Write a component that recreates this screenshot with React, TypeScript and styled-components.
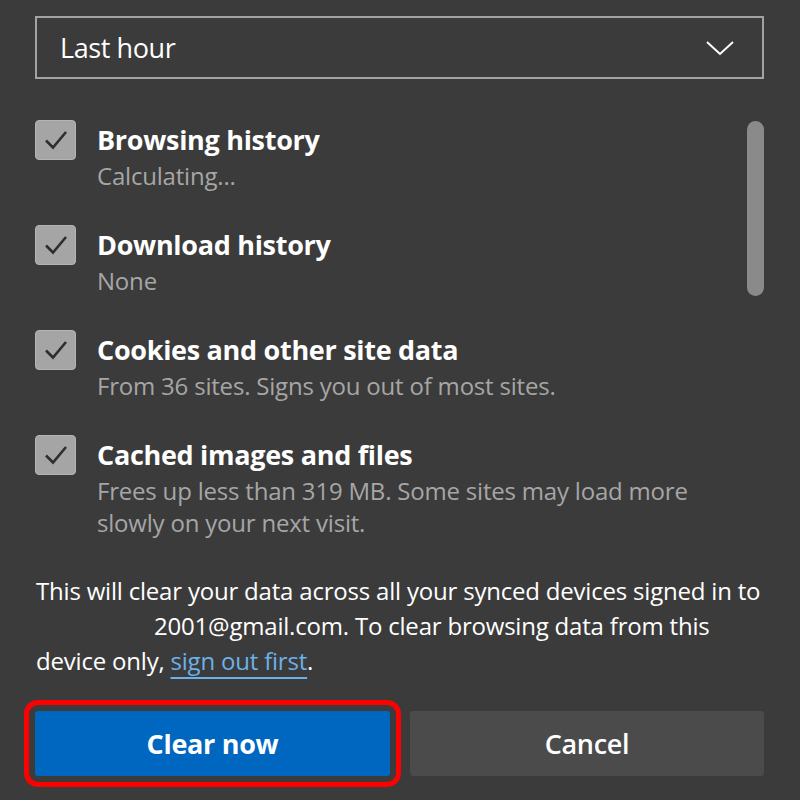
import styled, { createGlobalStyle } from "styled-components";

const GlobalStyle = createGlobalStyle`
  html, body {
    margin: 0;
    padding: 0;
    background: #3b3b3b;
  }
  body {
    font-family: "Open Sans", "Noto Sans", sans-serif;
    color: #ffffff;
  }
`;

const Panel = styled.div`
  width: 800px;
  height: 800px;
  box-sizing: border-box;
  padding: 16px 36px 0 35px;
  background: #3b3b3b;
  display: flex;
  flex-direction: column;
  overflow: hidden;
`;

const Select = styled.div`
  height: 63px;
  box-sizing: border-box;
  border: 2px solid #a3a3a3;
  display: flex;
  align-items: center;
  justify-content: space-between;
  padding: 0 28px 0 23px;
  font-size: 27px;
  letter-spacing: -0.4px;
`;

const ListArea = styled.div`
  display: flex;
  margin-top: 41px;
`;

const Items = styled.div`
  flex: 1;
  display: flex;
  flex-direction: column;
  gap: 33px;
`;

const Item = styled.div`
  display: flex;
  gap: 21px;
`;

const Box = styled.div`
  width: 41px;
  height: 40px;
  flex: none;
  box-sizing: border-box;
  background: #a5a5a5;
  border: 1px solid #b4b4b4;
  border-radius: 4px;
  display: flex;
  align-items: center;
  justify-content: center;
`;

const ItemText = styled.div`
  display: flex;
  flex-direction: column;
`;

const Title = styled.div`
  font-size: 27px;
  font-weight: 700;
  line-height: 40px;
  letter-spacing: -0.3px;
`;

const Sub = styled.div`
  font-size: 24px;
  line-height: 32px;
  color: #a6a6a6;
  max-width: 610px;
  letter-spacing: -0.2px;
`;

const Track = styled.div`
  width: 17px;
  flex: none;
  padding-top: 1px;
`;

const Thumb = styled.div`
  width: 17px;
  height: 175px;
  border-radius: 9px;
  background: #8a8a8a;
`;

const Info = styled.p`
  margin: 34px 0 0;
  font-size: 24px;
  line-height: 35px;
  letter-spacing: -0.2px;
  padding-left: 1px;
`;

const Redacted = styled.span`
  display: inline-block;
  width: 118px;
`;

const Link = styled.a`
  color: #6cb0e8;
  text-decoration: underline;
  text-underline-offset: 7px;
  text-decoration-thickness: 2px;
`;

const Buttons = styled.div`
  display: grid;
  grid-template-columns: 355px 1fr;
  gap: 20px;
  margin-top: 33px;
`;

const Button = styled.button<{ primary?: boolean }>`
  height: 65px;
  border: none;
  border-radius: 3px;
  font-family: inherit;
  font-size: 27px;
  font-weight: ${(p) => (p.primary ? 700 : 600)};
  letter-spacing: -0.3px;
  color: #ffffff;
  background: ${(p) => (p.primary ? "#0067c0" : "#4b4b4b")};
  outline: ${(p) => (p.primary ? "5px solid #ff0000" : "none")};
  outline-offset: 6px;
`;

const Check = () => (
  <svg width="26" height="22" viewBox="0 0 26 22">
    <path
      d="M3 11.5 L10 18.5 L23 3"
      fill="none"
      stroke="#2e2e2e"
      strokeWidth="2.6"
    />
  </svg>
);

const Chevron = () => (
  <svg width="28" height="16" viewBox="0 0 28 16">
    <path d="M1 2 L14 14 L27 2" fill="none" stroke="#ffffff" strokeWidth="2" />
  </svg>
);

const items = [
  { title: "Browsing history", sub: "Calculating..." },
  { title: "Download history", sub: "None" },
  {
    title: "Cookies and other site data",
    sub: "From 36 sites. Signs you out of most sites.",
  },
  {
    title: "Cached images and files",
    sub: "Frees up less than 319 MB. Some sites may load more slowly on your next visit.",
  },
];

export default function App() {
  return (
    <>
      <GlobalStyle />
      <Panel>
        <Select>
          <span>Last hour</span>
          <Chevron />
        </Select>
        <ListArea>
          <Items>
            {items.map((it) => (
              <Item key={it.title}>
                <Box>
                  <Check />
                </Box>
                <ItemText>
                  <Title>{it.title}</Title>
                  <Sub>{it.sub}</Sub>
                </ItemText>
              </Item>
            ))}
          </Items>
          <Track>
            <Thumb />
          </Track>
        </ListArea>
        <Info>
          This will clear your data across all your synced devices signed in to{" "}
          <Redacted />
          2001@gmail.com. To clear browsing data from this device only,{" "}
          <Link>sign out first</Link>.
        </Info>
        <Buttons>
          <Button primary>Clear now</Button>
          <Button>Cancel</Button>
        </Buttons>
      </Panel>
    </>
  );
}
